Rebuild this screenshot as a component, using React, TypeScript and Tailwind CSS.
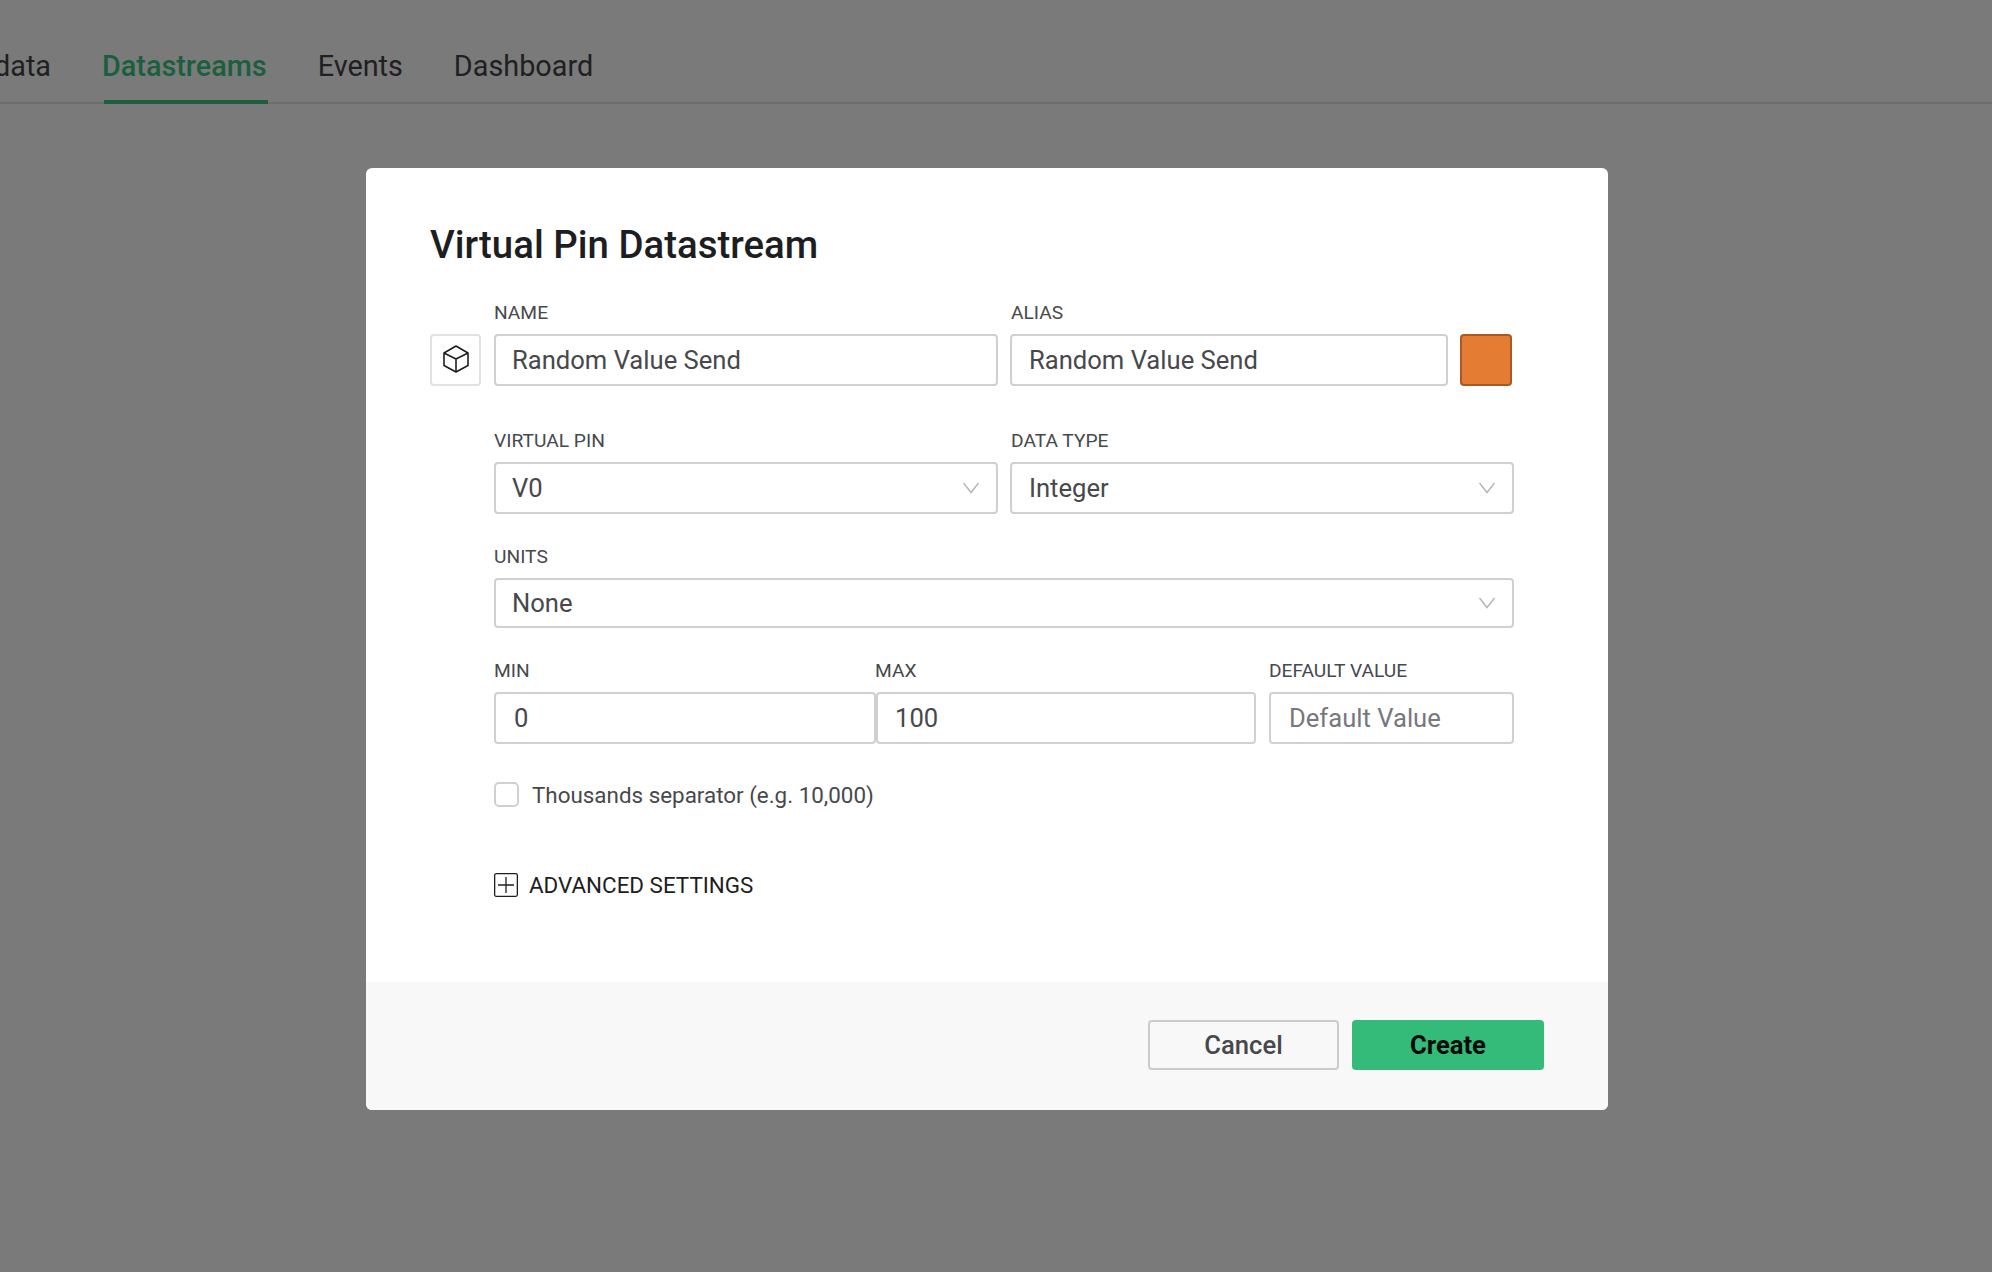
import React from "react";

const labelCls = "block h-[21px] mb-[11px] text-[19.2px] leading-[21px] text-[#47484c] whitespace-nowrap";
const boxCls = "flex items-center border-2 border-[#d0d0d0] rounded-[4px] bg-white text-[25.6px] text-[#47484c]";

function Chevron() {
  return (
    <svg width="18" height="12" viewBox="0 0 18 12" fill="none" className="absolute right-[16px] top-1/2 -translate-y-1/2">
      <path d="M1.5 1 L9 10.5 L16.5 1" stroke="#b5b5b5" strokeWidth="1.4" />
    </svg>
  );
}

function Field({
  label,
  value,
  className = "",
  select = false,
  h = "h-[52px]",
  pad = "pl-[16px]",
  labelPad = "",
}: {
  label: string;
  value: string;
  className?: string;
  select?: boolean;
  h?: string;
  pad?: string;
  labelPad?: string;
}) {
  return (
    <div className={className}>
      <span className={`${labelCls} ${labelPad}`}>{label}</span>
      <div className={`${boxCls} ${h} ${pad} relative`}>
        {value}
        {select && <Chevron />}
      </div>
    </div>
  );
}

export default function App() {
  return (
    <div className="h-[1272px] w-[1992px] overflow-hidden bg-[#7a7a7a] font-['Roboto',sans-serif]">
      <div className="flex h-[104px] border-b-2 border-[#6d6d6d] text-[28.8px] text-[#1f2023]">
        <div className="flex w-[51px] justify-end overflow-hidden pt-[47px] leading-[38px]">
          <span>data</span>
        </div>
        <div className="relative ml-[51px] pt-[47px] font-medium leading-[38px] text-[#1a5f3e]">
          Datastreams
          <div className="absolute bottom-[-2px] left-[2px] right-[-1px] h-[4px] bg-[#1a5f3e]" />
        </div>
        <div className="ml-[51px] pt-[47px] leading-[38px]">Events</div>
        <div className="ml-[51px] pt-[47px] leading-[38px]">Dashboard</div>
      </div>

      <div className="ml-[366px] mt-[64px] w-[1242px] overflow-hidden rounded-[6px] bg-white">
        <div className="h-[814px] pl-[64px] pt-[53px]">
          <h1 className="h-[48px] text-[38.4px] font-medium leading-[48px] text-[#1d1e21]">Virtual Pin Datastream</h1>

          <div className="mt-[33px] flex items-end">
            <div className="flex h-[52px] w-[51px] items-center justify-center rounded-[4px] border-2 border-[#e2e2e2]">
              <svg width="26" height="28" viewBox="0 0 26 28" fill="none" stroke="#1d1e21" strokeWidth="1.6" strokeLinejoin="round" className="mb-[3px]">
                <path d="M13 1 L25 8 V20.5 L13 27 L1 20.5 V8 Z" />
                <path d="M1 8 L13 14 L25 8 M13 14 V27" />
              </svg>
            </div>
            <Field label="NAME" value="Random Value Send" className="ml-[13px] w-[504px]" />
            <Field label="ALIAS" value="Random Value Send" className="ml-[12px] w-[438px]" pad="pl-[17px]" labelPad="pl-[1px]" />
            <div className="ml-[12px] h-[52px] w-[52px] rounded-[4px] border-2 border-[#a85a22] bg-[#e57c33]" />
          </div>

          <div className="ml-[64px] w-[1020px]">
            <div className="mt-[44px] flex gap-[12px]">
              <Field label="VIRTUAL PIN" value="V0" className="w-[504px]" select />
              <Field label="DATA TYPE" value="Integer" className="w-[504px]" select pad="pl-[17px]" labelPad="pl-[1px]" />
            </div>

            <Field label="UNITS" value="None" className="mt-[32px]" select h="h-[50px]" />

            <div className="mt-[32px] flex">
              <Field label="MIN" value="0" className="w-[382px]" pad="pl-[18px]" />
              <Field label="MAX" value="100" className="w-[380px]" pad="pl-[17px]" labelPad="-ml-[1px]" />
              <div className="ml-[13px] w-[245px]">
                <span className={labelCls}>DEFAULT VALUE</span>
                <div className={`${boxCls} h-[52px] pl-[18px] !text-[#77787b]`}>Default Value</div>
              </div>
            </div>

            <div className="mt-[38px] flex h-[25px] items-center">
              <div className="h-[25px] w-[25px] rounded-[5px] border-2 border-[#d0d0d0]" />
              <span className="ml-[13px] mt-[2px] text-[22.4px] text-[#47484c]">Thousands separator (e.g. 10,000)</span>
            </div>

            <div className="mt-[66px] flex h-[24px] items-center">
              <svg width="24" height="24" viewBox="0 0 24 24" fill="none" stroke="#1d1e21" strokeWidth="1.3">
                <rect x="0.65" y="0.65" width="22.7" height="22.7" rx="1.5" />
                <path d="M12 4 V20 M4 12 H20" />
              </svg>
              <span className="ml-[11px] mt-[2px] text-[22.4px] text-[#1d1e21]">ADVANCED SETTINGS</span>
            </div>
          </div>
        </div>

        <div className="flex h-[128px] items-start justify-end gap-[13px] bg-[#f8f8f8] pr-[64px] pt-[38px]">
          <button className="h-[50px] w-[191px] rounded-[4px] border-2 border-[#cbcbcb] text-[25.6px] font-medium text-[#47484c]">Cancel</button>
          <button className="h-[50px] w-[192px] rounded-[4px] bg-[#34bb79] text-[25.6px] font-bold text-[#0b0b0b]">Create</button>
        </div>
      </div>
    </div>
  );
}
